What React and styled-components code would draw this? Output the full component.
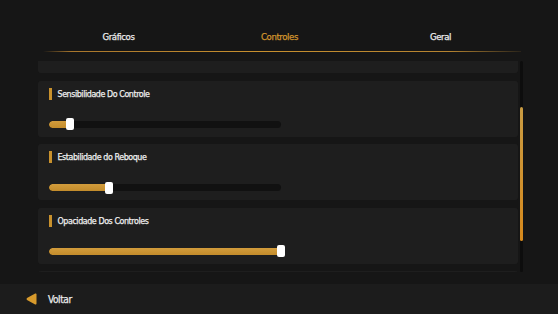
import React, { useLayoutEffect, useRef } from "react";
import styled, { createGlobalStyle } from "styled-components";

const GlobalStyle = createGlobalStyle`
  html, body {
    margin: 0;
    padding: 0;
    background: #161616;
  }
  body {
    font-family: "DejaVu Sans Condensed", "Liberation Sans", sans-serif;
    color: #e4e4e4;
  }
`;

const Page = styled("div")`
  width: 100%;
  height: 100vh;
  display: flex;
  flex-direction: column;
  background: #161616;
  overflow: hidden;
`;

const Tabs = styled("div")`
  height: 52px;
  margin: 0 37px 0 38px;
  padding-bottom: 7px;
  box-sizing: border-box;
  display: grid;
  grid-template-columns: repeat(3, 1fr);
  align-items: end;
  position: relative;
  &::after {
    content: "";
    position: absolute;
    left: 5px;
    right: 0;
    bottom: 0;
    height: 1.5px;
    background: linear-gradient(
      90deg,
      rgba(176, 122, 40, 0) 0%,
      #a8762c 6%,
      #c8902e 45%,
      #b58330 85%,
      rgba(120, 90, 40, 0.2) 100%
    );
  }
`;

const Tab = styled("div")`
  text-align: center;
  font-size: 9.5px;
  line-height: 16px;
  letter-spacing: -0.4px;
  -webkit-text-stroke: 0.25px currentColor;
  color: ${(p) => (p.active ? "#d2952e" : "#ececec")};
`;

const Main = styled("div")`
  height: 211px;
  margin: 9px 35px 12px 38px;
  display: flex;
  gap: 2px;
`;

const List = styled("div")`
  width: 480px;
  height: 100%;
  overflow-y: auto;
  scrollbar-width: none;
  &::-webkit-scrollbar {
    display: none;
  }
`;

const Card = styled("div")`
  height: 56px;
  margin-bottom: 7.5px;
  background: #1e1e1e;
  border-radius: 3px;
  padding: 7px 11px 0;
  box-sizing: border-box;
`;

const Label = styled("div")`
  display: flex;
  align-items: center;
  gap: 6px;
  height: 12px;
  font-size: 8.8px;
  letter-spacing: -0.4px;
  -webkit-text-stroke: 0.25px currentColor;
  color: #efefef;
  &::before {
    content: "";
    width: 2.5px;
    height: 12px;
    background: #c8912d;
  }
`;

const Slider = styled("div")`
  position: relative;
  width: 232px;
  height: 12px;
  margin-top: 18.5px;
  display: flex;
  align-items: center;
`;

const Track = styled("div")`
  width: 100%;
  height: 7px;
  border-radius: 4px;
  background: #111111;
  overflow: hidden;
`;

const Fill = styled("div")`
  height: 100%;
  border-radius: 4px;
  background: linear-gradient(180deg, #d29c3c 0%, #c38c2b 100%);
`;

const Thumb = styled("div")`
  position: absolute;
  top: 0;
  width: 8px;
  height: 12px;
  margin-left: -4px;
  border-radius: 2px;
  background: #ffffff;
`;

const ScrollTrack = styled("div")`
  width: 3px;
  height: 100%;
  border-radius: 2px;
  background: #0d0d0d;
  position: relative;
`;

const ScrollThumb = styled("div")`
  position: absolute;
  left: 0;
  width: 3px;
  border-radius: 2px;
  background: linear-gradient(180deg, #c99b42 0%, #cf9230 50%, #d6891c 100%);
`;

const BottomBar = styled("div")`
  flex: 1;
  background: #1c1c1c;
  display: flex;
  align-items: center;
  padding-left: 26px;
  gap: 11px;
`;

const BackText = styled("span")`
  font-size: 10px;
  letter-spacing: -0.4px;
  -webkit-text-stroke: 0.25px currentColor;
  color: #ececec;
`;

// the first and last entries sit mostly outside the scrolled view
const settings = [
  { id: "above" },
  { id: "sens", label: "Sensibilidade Do Controle", value: 9 },
  { id: "estab", label: "Estabilidade do Reboque", value: 26 },
  { id: "opac", label: "Opacidade Dos Controles", value: 100 },
  { id: "below" },
];

const SettingCard = ({ label, value }) => (
  <Card>
    {label && <Label>{label}</Label>}
    {value !== undefined && (
      <Slider>
        <Track>
          <Fill style={{ width: `${value}%` }} />
        </Track>
        <Thumb style={{ left: `${value}%` }} />
      </Slider>
    )}
  </Card>
);

const App = () => {
  const listRef = useRef(null);

  useLayoutEffect(() => {
    if (listRef.current) listRef.current.scrollTop = 44;
  }, []);

  return (
    <Page>
      <GlobalStyle />
      <Tabs>
        <Tab>Gráficos</Tab>
        <Tab active>Controles</Tab>
        <Tab>Geral</Tab>
      </Tabs>
      <Main>
        <List ref={listRef}>
          {settings.map((s) => (
            <SettingCard key={s.id} label={s.label} value={s.value} />
          ))}
        </List>
        <ScrollTrack>
          <ScrollThumb style={{ top: "46px", height: "134px" }} />
        </ScrollTrack>
      </Main>
      <BottomBar>
        <svg width="11" height="12" viewBox="0 0 11 12">
          <path
            d="M9.2 0.6 Q10.5 0 10.5 1.4 L10.5 10.6 Q10.5 12 9.2 11.4 L1 6.9 Q0 6 1 5.1 Z"
            fill="#d79a2c"
          />
        </svg>
        <BackText>Voltar</BackText>
      </BottomBar>
    </Page>
  );
};

export default App;
